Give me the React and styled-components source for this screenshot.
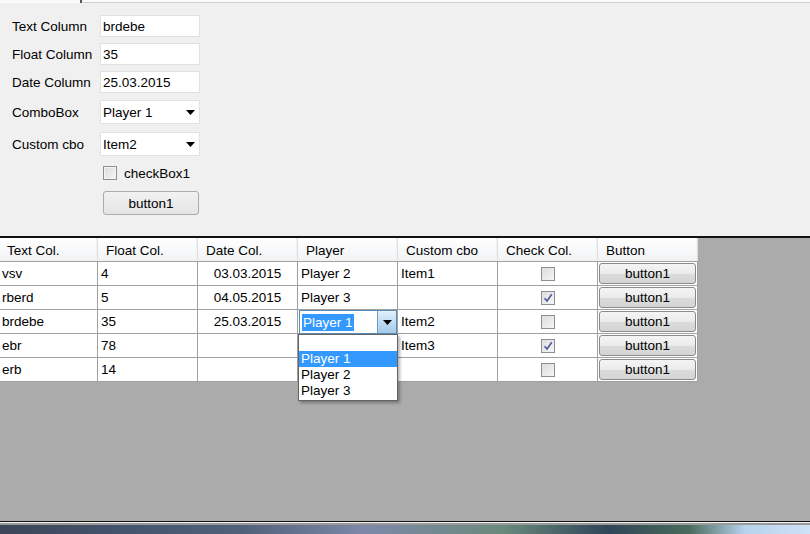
import React from "react";
import styled, { createGlobalStyle } from "styled-components";

const GlobalStyle = createGlobalStyle`
  html, body {
    margin: 0;
    padding: 0;
    overflow: hidden;
  }
  body {
    font-family: "Liberation Sans", Arial, sans-serif;
    font-size: 13.5px;
    color: #000;
  }
`;

const columns = [
  { key: "text", title: "Text Col.", width: 98 },
  { key: "float", title: "Float Col.", width: 100 },
  { key: "date", title: "Date Col.", width: 100, align: "center" },
  { key: "player", title: "Player", width: 100 },
  { key: "custom", title: "Custom cbo", width: 100 },
  { key: "check", title: "Check Col.", width: 100 },
  { key: "button", title: "Button", width: 100 },
];

const rows = [
  { text: "vsv", float: "4", date: "03.03.2015", player: "Player 2", custom: "Item1", check: false },
  { text: "rberd", float: "5", date: "04.05.2015", player: "Player 3", custom: "", check: true },
  { text: "brdebe", float: "35", date: "25.03.2015", player: "Player 1", custom: "Item2", check: false, editing: true },
  { text: "ebr", float: "78", date: "", player: "", custom: "Item3", check: true },
  { text: "erb", float: "14", date: "", player: "", custom: "", check: false },
];

const formFields = [
  { label: "Text Column", value: "brdebe", kind: "text", top: 12 },
  { label: "Float Column", value: "35", kind: "text", top: 6 },
  { label: "Date Column", value: "25.03.2015", kind: "text", top: 6 },
  { label: "ComboBox", value: "Player 1", kind: "combo", top: 7 },
  { label: "Custom cbo", value: "Item2", kind: "combo", top: 8 },
];

const DownArrow = () => (
  <svg width="9" height="5" viewBox="0 0 9 5">
    <path d="M0 0 H9 L4.5 5 Z" fill="#000" />
  </svg>
);

const CheckMark = () => (
  <svg width="10" height="10" viewBox="0 0 10 10">
    <path d="M1.5 5.2 L4 8 L8.8 1.2" fill="none" stroke="#4a5a9e" strokeWidth="1.6" />
  </svg>
);

const App = () => {
  return (
    <Page>
      <GlobalStyle />
      <TopPanel>
        <TabEdge>
          <TabLeft />
          <TabRight />
        </TabEdge>
        <Form>
          {formFields.map((f) => (
            <FormRow key={f.label} $top={f.top} $height={f.kind === "combo" ? 24 : 22}>
              <Label>{f.label}</Label>
              {f.kind === "text" ? (
                <TextBox>{f.value}</TextBox>
              ) : (
                <Combo>
                  <span>{f.value}</span>
                  <DownArrow />
                </Combo>
              )}
            </FormRow>
          ))}
          <FormRow $top={10} $height={14}>
            <Label />
            <CheckLine>
              <CheckBox />
              <span>checkBox1</span>
            </CheckLine>
          </FormRow>
          <FormRow $top={11} $height={24}>
            <Label />
            <FormButton>button1</FormButton>
          </FormRow>
        </Form>
      </TopPanel>
      <Divider />
      <GridArea>
        <Grid>
          <HeaderRow>
            {columns.map((c) => (
              <HeaderCell key={c.key} $width={c.width}>
                {c.title}
              </HeaderCell>
            ))}
          </HeaderRow>
          {rows.map((r, i) => (
            <Row key={i}>
              <Cell $width={98}>{r.text}</Cell>
              <Cell $width={100}>{r.float}</Cell>
              <Cell $width={100} $align="center">
                {r.date}
              </Cell>
              {r.editing ? (
                <EditCell $width={100}>
                  <EditCombo>
                    <Selected>{r.player}</Selected>
                    <DropButton>
                      <DownArrow />
                    </DropButton>
                  </EditCombo>
                  <DropList>
                    <DropItem />
                    <DropItem $active>Player 1</DropItem>
                    <DropItem>Player 2</DropItem>
                    <DropItem>Player 3</DropItem>
                  </DropList>
                </EditCell>
              ) : (
                <Cell $width={100}>{r.player}</Cell>
              )}
              <Cell $width={100}>{r.custom}</Cell>
              <Cell $width={100} $align="center">
                <GridCheck>{r.check && <CheckMark />}</GridCheck>
              </Cell>
              <ButtonCell $width={100}>
                <GridButton>button1</GridButton>
              </ButtonCell>
            </Row>
          ))}
        </Grid>
      </GridArea>
      <BottomEdge />
    </Page>
  );
};

export default App;

const Page = styled.div`
  width: 810px;
  height: 534px;
  display: flex;
  flex-direction: column;
  overflow: hidden;
`;

const TopPanel = styled.div`
  height: 236px;
  background: #f0f0f0;
  flex-shrink: 0;
`;

const TabEdge = styled.div`
  display: flex;
  height: 3px;
`;

const TabLeft = styled.div`
  width: 80px;
  background: #fbfbfb;
  border-right: 2px solid #555;
`;

const TabRight = styled.div`
  flex: 1;
  margin-left: 1px;
  background: #fafafa;
  border-bottom: 1px solid #cfcfcf;
`;

const Form = styled.div`
  display: flex;
  flex-direction: column;
  padding-left: 12px;
`;

const FormRow = styled.div`
  display: flex;
  align-items: center;
  margin-top: ${(p) => p.$top}px;
  height: ${(p) => p.$height}px;
`;

const Label = styled.div`
  width: 88px;
  flex-shrink: 0;
`;

const TextBox = styled.div`
  width: 100px;
  height: 22px;
  box-sizing: border-box;
  background: #fff;
  border: 1px solid #e2e2e2;
  padding: 0 2px;
  display: flex;
  align-items: center;
`;

const Combo = styled(TextBox)`
  height: 24px;
  justify-content: space-between;
  padding: 0 4px 0 2px;
`;

const CheckLine = styled.div`
  display: flex;
  align-items: center;
  gap: 7px;
  padding-left: 3px;
`;

const CheckBox = styled.div`
  width: 14px;
  height: 14px;
  box-sizing: border-box;
  border: 1px solid #8e8f8f;
  background: linear-gradient(135deg, #dcdcdc, #f6f6f6);
  box-shadow: inset 0 0 0 1px #f4f4f4;
`;

const FormButton = styled.div`
  margin-left: 3px;
  width: 96px;
  height: 24px;
  box-sizing: border-box;
  border: 1px solid #acacac;
  border-radius: 3px;
  background: linear-gradient(#f2f2f2, #e4e4e4);
  display: flex;
  align-items: center;
  justify-content: center;
`;

const Divider = styled.div`
  height: 2px;
  flex-shrink: 0;
  background: #111;
`;

const GridArea = styled.div`
  flex: 1;
  background: #ababab;
`;

const Grid = styled.div`
  width: 698px;
  display: flex;
  flex-direction: column;
`;

const HeaderRow = styled.div`
  display: flex;
  height: 24px;
  box-sizing: border-box;
  border-bottom: 1px solid #a0a0a0;
  background: linear-gradient(#ffffff, #f7f8f9 60%, #f1f2f4);
`;

const HeaderCell = styled.div`
  width: ${(p) => p.$width}px;
  box-sizing: border-box;
  border-right: 1px solid #dedede;
  box-shadow: inset -1px 0 0 #f3f3f3;
  padding-left: ${(p) => (p.$width === 98 ? 7 : 8)}px;
  padding-top: 1px;
  display: flex;
  align-items: center;
`;

const Row = styled.div`
  display: flex;
  height: 24px;
  background: #fff;
`;

const Cell = styled.div`
  width: ${(p) => p.$width}px;
  box-sizing: border-box;
  border-right: 1px solid #a0a0a0;
  border-bottom: 1px solid #a0a0a0;
  padding: 0 3px 0 ${(p) => (p.$width === 98 ? 2 : 3)}px;
  display: flex;
  align-items: center;
  justify-content: ${(p) => (p.$align === "center" ? "center" : "flex-start")};
  white-space: nowrap;
`;

const ButtonCell = styled(Cell)`
  padding: 1px 1px 0 1px;
  align-items: flex-start;
`;

const EditCell = styled(Cell)`
  position: relative;
  padding: 0;
  z-index: 2;
`;

const EditCombo = styled.div`
  margin-left: 1px;
  width: 98px;
  height: 24px;
  margin-bottom: -1px;
  box-sizing: border-box;
  border: 1px solid #5b8cb8;
  background: #fff;
  display: flex;
  align-items: center;
  justify-content: space-between;
  padding-left: 2px;
`;

const Selected = styled.span`
  background: #3399ff;
  color: #fff;
  line-height: 17px;
  padding: 0 1px;
`;

const DropButton = styled.div`
  width: 19px;
  height: 22px;
  box-sizing: border-box;
  border-left: 1px solid #6a9cc4;
  background: linear-gradient(#e4f1fb, #c0dcf2 50%, #a4cbe9);
  display: flex;
  align-items: center;
  justify-content: center;
`;

const DropList = styled.div`
  position: absolute;
  top: 24px;
  left: 0;
  width: 100px;
  box-sizing: border-box;
  border: 1px solid #646464;
  background: #fff;
  box-shadow: 2px 2px 3px rgba(0, 0, 0, 0.3);
  padding-bottom: 1px;
`;

const DropItem = styled.div`
  height: 16px;
  line-height: 16px;
  padding-left: 2px;
  background: ${(p) => (p.$active ? "#3399ff" : "transparent")};
  color: ${(p) => (p.$active ? "#fff" : "#000")};
`;

const GridCheck = styled.div`
  width: 14px;
  height: 14px;
  box-sizing: border-box;
  border: 1px solid #8e8f8f;
  background: linear-gradient(135deg, #dcdcdc, #f6f6f6);
  display: flex;
  align-items: center;
  justify-content: center;
`;

const GridButton = styled.div`
  width: 97px;
  height: 21px;
  box-sizing: border-box;
  border: 1px solid #8a8a8a;
  border-radius: 3px;
  background: linear-gradient(#f4f4f4, #ebebeb 50%, #dcdcdc 51%, #d4d4d4);
  display: flex;
  align-items: center;
  justify-content: center;
`;

const BottomEdge = styled.div`
  height: 13px;
  flex-shrink: 0;
  border-top: 1px solid #111;
  box-sizing: border-box;
  background:
    linear-gradient(#f4f4f4 0 1px, #9a9a9a 1px 3px, transparent 3px),
    linear-gradient(90deg, #3c4558, #44546c 15%, #52617a 30%, #7d88a8 45%, #6a8a7c 62%, #2f4658 75%, #4a6a5c 85%, #b8d2ee 92%, #cfe2f5);
`;
